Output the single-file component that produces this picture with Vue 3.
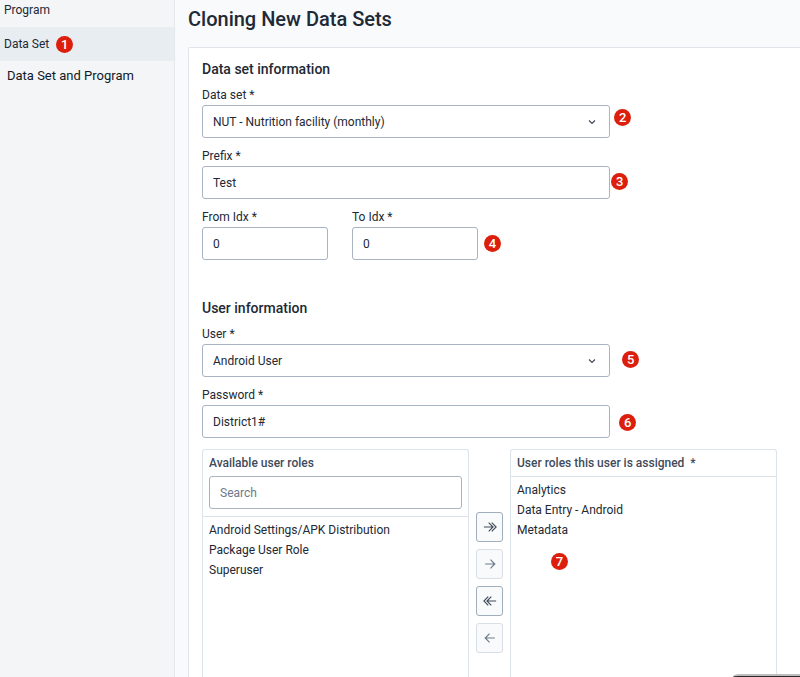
<script setup>
import { ref } from 'vue'

const dataSet = ref('NUT - Nutrition facility (monthly)')
const prefix = ref('Test')
const fromIdx = ref('0')
const toIdx = ref('0')
const user = ref('Android User')
const password = ref('District1#')
const search = ref('')

const available = ['Android Settings/APK Distribution', 'Package User Role', 'Superuser']
const assigned = ['Analytics', 'Data Entry - Android', 'Metadata']

const transfers = [
  { label: 'Add all', path: 'M1 8H11.5M6.5 3L11.5 8L6.5 13M10 3L15 8L10 13', disabled: false },
  { label: 'Add selected', path: 'M2.5 8H13.5M8.5 3L13.5 8L8.5 13', disabled: true },
  { label: 'Remove all', path: 'M15 8H4.5M9.5 3L4.5 8L9.5 13M6 3L1 8L6 13', disabled: false },
  { label: 'Remove selected', path: 'M13.5 8H2.5M7.5 3L2.5 8L7.5 13', disabled: true }
]
</script>

<template>
  <div class="app">
    <nav class="sidebar">
      <a href="#program" class="nav-item nav-first">Program</a>
      <a href="#data-set" class="nav-item nav-active">Data Set <span class="badge">1</span></a>
      <a href="#both" class="nav-item nav-both">Data Set and Program</a>
    </nav>

    <main class="main">
      <h1 class="title">Cloning New Data Sets</h1>
      <form class="card" @submit.prevent>
        <section class="section">
          <h2 class="heading">Data set information</h2>
          <div class="field">
            <label for="data-set">Data set *</label>
            <div class="control">
              <select id="data-set" v-model="dataSet">
                <option>NUT - Nutrition facility (monthly)</option>
              </select>
              <svg class="chevron" viewBox="0 0 8 8"><path d="M1 2.5L4 5.5L7 2.5" /></svg>
              <span class="badge callout callout-2">2</span>
            </div>
          </div>
          <div class="field">
            <label for="prefix">Prefix *</label>
            <div class="control">
              <input id="prefix" v-model="prefix" type="text" />
              <span class="badge callout callout-3">3</span>
            </div>
          </div>
          <div class="pair">
            <div class="field">
              <label for="from-idx">From Idx *</label>
              <div class="control"><input id="from-idx" v-model="fromIdx" type="text" /></div>
            </div>
            <div class="field">
              <label for="to-idx">To Idx *</label>
              <div class="control">
                <input id="to-idx" v-model="toIdx" type="text" />
                <span class="badge callout callout-4">4</span>
              </div>
            </div>
          </div>
        </section>

        <section class="section">
          <h2 class="heading">User information</h2>
          <div class="field">
            <label for="user">User *</label>
            <div class="control">
              <select id="user" v-model="user">
                <option>Android User</option>
              </select>
              <svg class="chevron" viewBox="0 0 8 8"><path d="M1 2.5L4 5.5L7 2.5" /></svg>
              <span class="badge callout callout-5">5</span>
            </div>
          </div>
          <div class="field">
            <label for="password">Password *</label>
            <div class="control">
              <input id="password" v-model="password" type="text" />
              <span class="badge callout callout-6">6</span>
            </div>
          </div>
        </section>

        <section class="transfer">
          <div class="panel">
            <div class="panel-head panel-search">
              <label for="role-search" class="panel-title">Available user roles</label>
              <input id="role-search" v-model="search" type="text" placeholder="Search" />
            </div>
            <ul class="roles">
              <li v-for="role in available" :key="role">{{ role }}</li>
            </ul>
          </div>
          <div class="actions">
            <button
              v-for="t in transfers"
              :key="t.label"
              type="button"
              :aria-label="t.label"
              :disabled="t.disabled"
            >
              <svg viewBox="0 0 16 16"><path :d="t.path" /></svg>
            </button>
          </div>
          <div class="panel">
            <div class="panel-head">
              <h3 class="panel-title">User roles this user is assigned &nbsp;*</h3>
            </div>
            <ul class="roles">
              <li v-for="role in assigned" :key="role">{{ role }}</li>
            </ul>
            <span class="badge callout-7">7</span>
          </div>
        </section>
      </form>
    </main>
    <div class="dock"></div>
  </div>
</template>

<style>
body {
  overflow: hidden;
}
</style>

<style scoped>
* {
  box-sizing: border-box;
}
.app {
  display: flex;
  min-height: 100vh;
  background: #f8fafc;
  color: #212934;
  font-family: Roboto, "Liberation Sans", sans-serif;
  font-size: 12px;
  line-height: 20px;
}
.sidebar {
  flex: none;
  width: 175px;
  background: #f3f5f7;
  border-right: 1px solid #e4e8ed;
}
.nav-item {
  display: flex;
  align-items: center;
  gap: 7px;
  height: 34px;
  padding: 0 4px;
  color: #212934;
  text-decoration: none;
}
.nav-first {
  height: 27px;
  padding-bottom: 7px;
}
.nav-active {
  background: #e8edf2;
}
.nav-both {
  height: 30px;
  padding: 0 7px;
  color: #111827;
  font-size: 13px;
}
.badge {
  display: flex;
  align-items: center;
  justify-content: center;
  width: 17px;
  height: 17px;
  border-radius: 50%;
  background: #dc1f0c;
  color: #fff;
  font-size: 13px;
  font-weight: 500;
  line-height: 17px;
}
.main {
  flex: 1;
  min-width: 0;
  display: flex;
  flex-direction: column;
  padding-left: 13px;
}
.title {
  margin: 0;
  padding: 7px 0 16px;
  font-size: 20px;
  font-weight: 500;
  line-height: 24px;
}
.card {
  flex: 1;
  display: flex;
  flex-direction: column;
  padding: 11px 23px 0 13px;
  background: #fff;
  border: 1px solid #e0e5eb;
  border-width: 1px 0 0 1px;
  border-top-left-radius: 2px;
}
.section {
  display: flex;
  flex-direction: column;
  gap: 8px;
  width: 71%;
}
.section + .section {
  margin-top: 38px;
}
.heading {
  margin: 0 0 -2px;
  font-size: 14px;
  font-weight: 500;
  line-height: 20px;
}
.field {
  display: flex;
  flex-direction: column;
}
.pair {
  display: grid;
  grid-template-columns: 126px 126px;
  gap: 24px;
}
.control {
  position: relative;
}
input,
select {
  display: block;
  width: 100%;
  height: 33px;
  margin: 0;
  padding: 0 10px;
  appearance: none;
  background: #fff;
  border: 1px solid #a8b4c2;
  border-radius: 3px;
  color: #212934;
  font: inherit;
  outline: none;
}
input::placeholder {
  color: #6e7a8a;
  opacity: 1;
}
.chevron {
  position: absolute;
  top: 13px;
  right: 14px;
  width: 8px;
  height: 8px;
  fill: none;
  stroke: #404b5a;
  stroke-width: 1.2;
  pointer-events: none;
}
.callout {
  position: absolute;
  left: 100%;
}
.callout-2 {
  top: 4px;
  margin-left: 4px;
}
.callout-3 {
  top: 7px;
  margin-left: 1px;
}
.callout-4 {
  top: 8px;
  margin-left: 6px;
}
.callout-5 {
  top: 7px;
  margin-left: 12px;
}
.callout-6 {
  top: 9px;
  margin-left: 9px;
}
.callout-7 {
  position: absolute;
  top: 103px;
  left: 40px;
}
.transfer {
  flex: 1;
  display: flex;
  gap: 7px;
  margin-top: 11px;
}
.panel {
  position: relative;
  flex: 1;
  min-width: 0;
  border: 1px solid #dde3ea;
  border-bottom: 0;
  border-radius: 3px 3px 0 0;
}
.panel-head {
  padding: 0 6px;
  border-bottom: 1px solid #dde3ea;
}
.panel-search {
  padding-bottom: 7px;
}
.panel-title {
  display: block;
  margin: 0;
  color: #404b5a;
  font-size: 12px;
  font-weight: 500;
  line-height: 26px;
}
.roles {
  margin: 0;
  padding: 3px 6px;
  list-style: none;
}
.actions {
  flex: none;
  display: flex;
  flex-direction: column;
  gap: 7px;
  width: 27px;
  padding-top: 63px;
}
button {
  display: flex;
  align-items: center;
  justify-content: center;
  height: 30px;
  padding: 0;
  background: #f9fafb;
  border: 1px solid #a0adba;
  border-radius: 3px;
  color: #404b5a;
}
button:disabled {
  border-color: #d9dfe6;
  color: #6e7a8a;
}
button svg {
  width: 14px;
  height: 14px;
  fill: none;
  stroke: currentColor;
  stroke-width: 1.3;
}
.dock {
  position: fixed;
  right: 0;
  bottom: 0;
  width: 67px;
  height: 3px;
  background: #2b2829;
  border-top: 2px solid #bdbdbd;
  border-top-left-radius: 6px 3px;
}
</style>
